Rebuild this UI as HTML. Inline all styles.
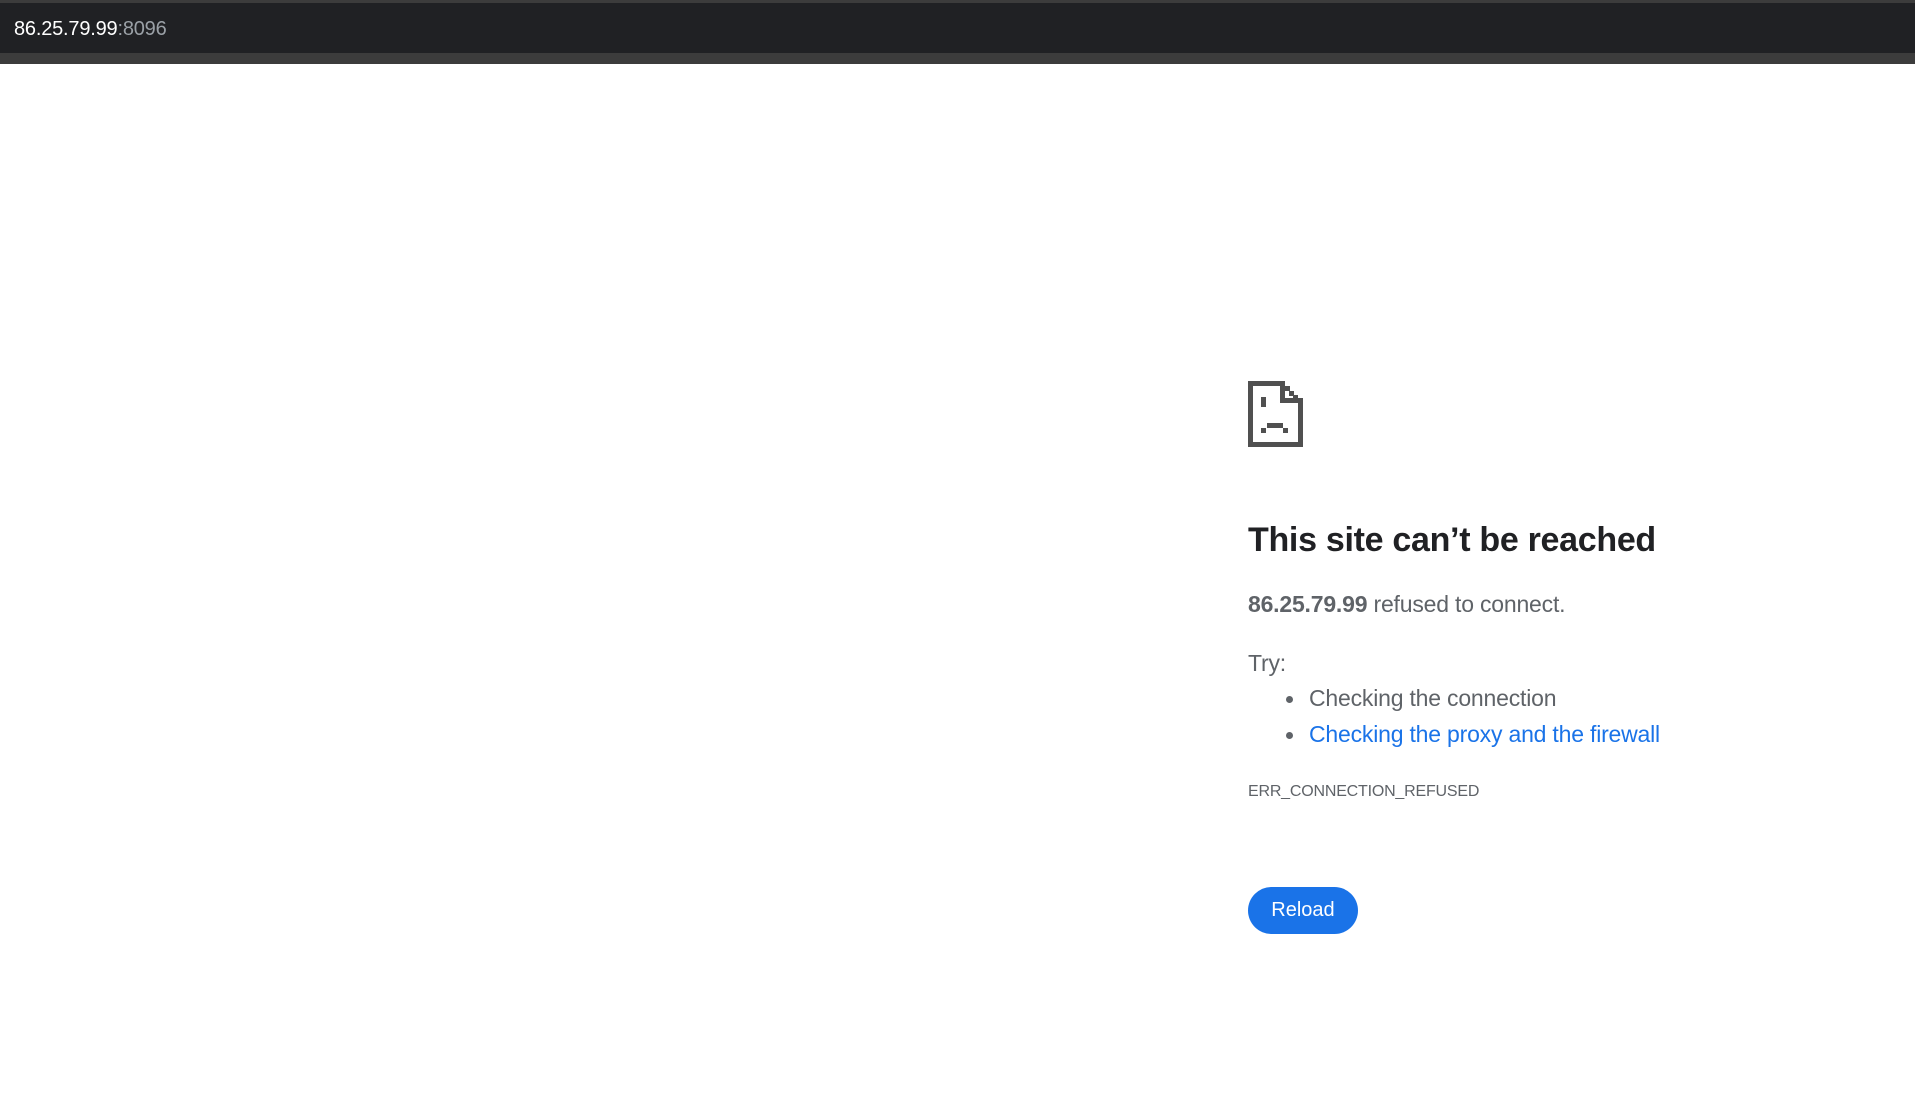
<!DOCTYPE html>
<html><head><meta charset="utf-8"><style>
html,body{margin:0;padding:0;width:1915px;height:1103px;background:#fff;overflow:hidden;font-family:"Liberation Sans",sans-serif}
.top{position:absolute;left:0;top:0;width:1915px;height:3px;background:#3c3c3c}
.bar{position:absolute;left:0;top:3px;width:1915px;height:50px;background:#202124}
.line{position:absolute;left:0;top:53px;width:1915px;height:11px;background:#3c3c3c}
.url{position:absolute;left:14px;top:18px;font-size:20px;color:#fff;letter-spacing:-0.2px}
.url span{color:#9aa0a6}
.icon{position:absolute;left:1248px;top:381px}
h1{position:absolute;left:1248px;top:521px;margin:0;font-size:34px;font-weight:bold;color:#202124;white-space:nowrap;letter-spacing:-0.3px}
.p{position:absolute;left:1248px;font-size:23px;color:#5f6368;white-space:nowrap;letter-spacing:-0.2px}
.p b{color:#5f6368}
.dot{position:absolute;left:1286px;width:7px;height:7px;border-radius:50%;background:#5f6368}
.err{position:absolute;left:1248px;top:783px;font-size:16px;color:#5f6368;letter-spacing:-0.2px}
.btn{position:absolute;left:1248px;top:887px;width:110px;height:47px;border-radius:24px;background:#1a73e8;color:#fff;font-size:20px;line-height:47px;text-align:center}
</style></head><body>
<div class="top"></div><div class="bar"></div><div class="line"></div>
<div class="url">86.25.79.99<span>:8096</span></div>
<svg class="icon" width="55" height="66" viewBox="0 0 55 66" fill="#505050">
<rect x="0" y="0" width="36" height="5"/>
<rect x="0" y="0" width="5" height="66"/>
<rect x="0" y="61" width="55" height="5"/>
<rect x="50" y="17" width="5" height="49"/>
<rect x="32" y="0" width="5" height="22"/>
<rect x="32" y="17" width="23" height="5"/>
<rect x="37" y="5" width="5" height="5"/>
<rect x="41" y="10" width="5" height="5"/>
<rect x="45" y="14" width="5" height="4"/>
<rect x="13" y="16" width="5" height="10"/>
<rect x="19" y="42" width="16" height="5"/>
<rect x="13" y="47" width="5" height="5"/>
<rect x="35" y="47" width="5" height="5"/>
</svg>
<h1>This site can’t be reached</h1>
<div class="p" style="top:591px"><b>86.25.79.99</b> refused to connect.</div>
<div class="p" style="top:650px">Try:</div>
<div class="dot" style="top:696px"></div>
<div class="p" style="left:1309px;top:685px">Checking the connection</div>
<div class="dot" style="top:732px"></div>
<div class="p" style="left:1309px;top:721px;color:#1a73e8">Checking the proxy and the firewall</div>
<div class="err">ERR_CONNECTION_REFUSED</div>
<div class="btn">Reload</div>
</body></html>
